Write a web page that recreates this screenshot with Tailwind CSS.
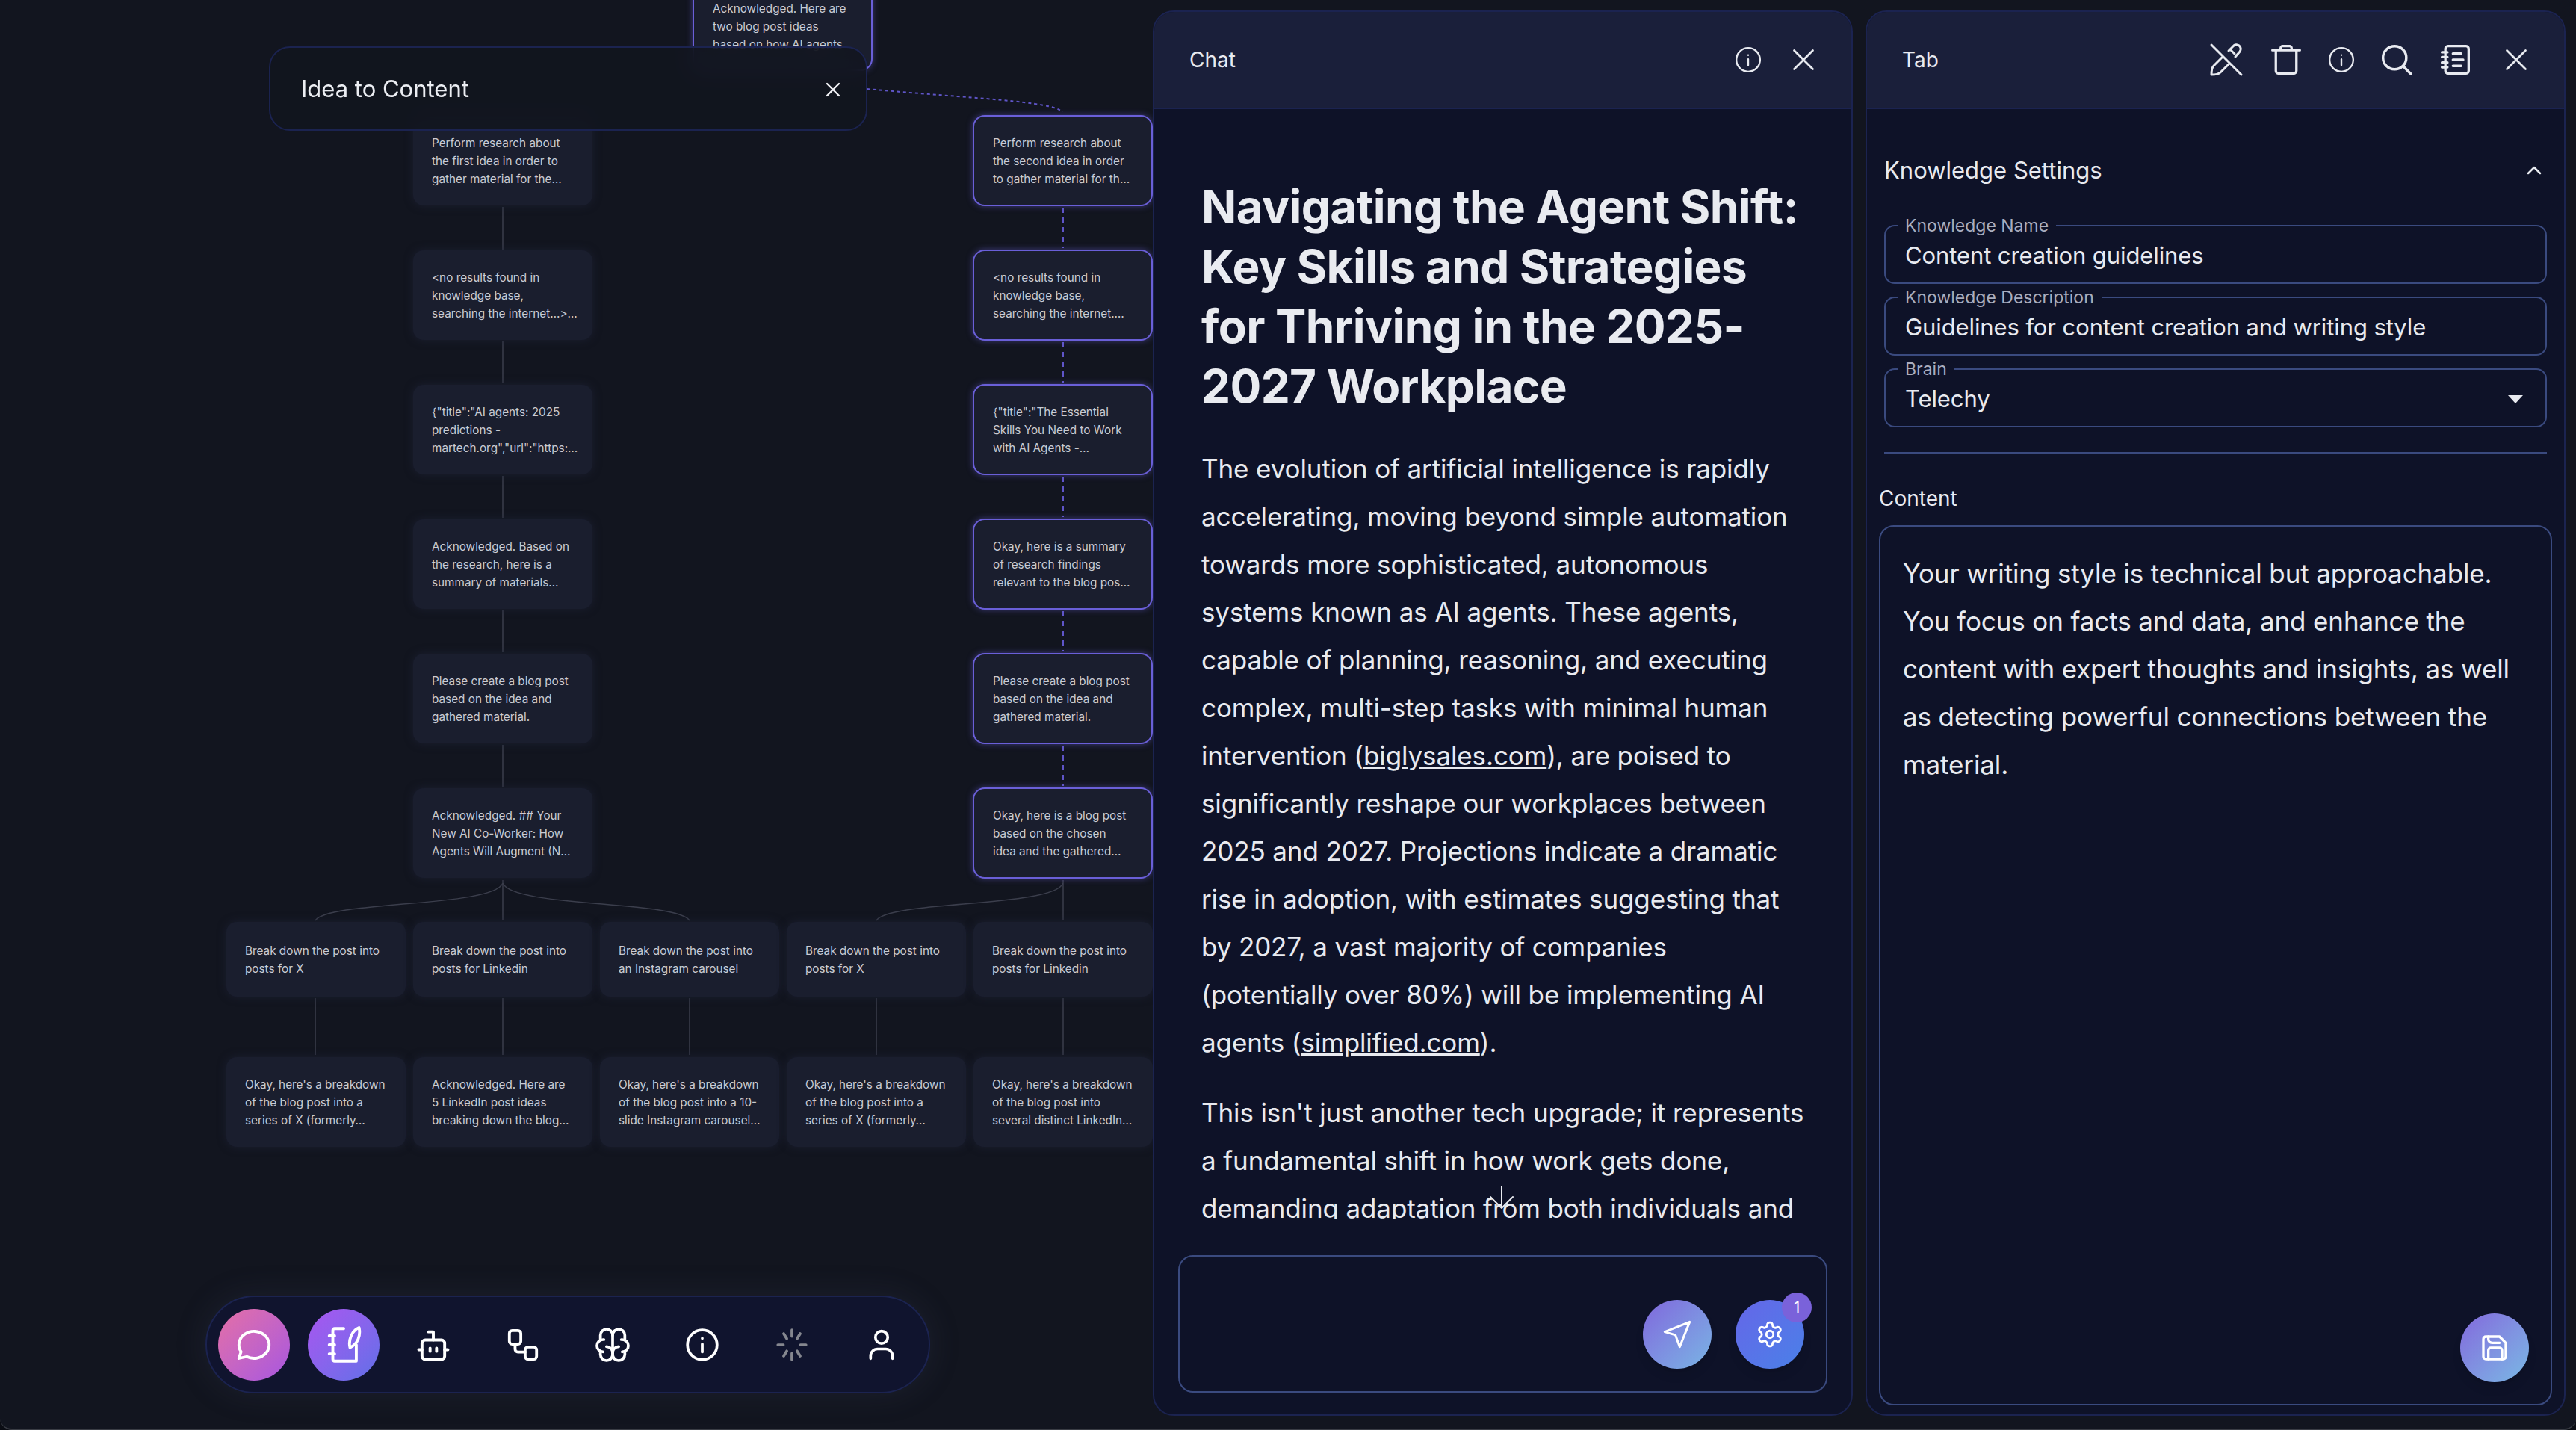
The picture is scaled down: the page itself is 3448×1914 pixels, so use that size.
<!DOCTYPE html>
<html lang="en">
<head>
<meta charset="UTF-8">
<title>Idea to Content</title>
<script src="https://cdn.jsdelivr.net/npm/@tailwindcss/browser@4"></script>
</head>
<body class="bg-[#0b0d14]">
<div class="w-[3448px] h-[1914px] flex gap-[17px] pt-[14px] pr-[14px] pb-[17px] bg-[#12151f] border-b-2 border-[#3a3d45] rounded-b-[16px] overflow-hidden font-['Inter',sans-serif] text-[#e8eaf0]">

  <!-- canvas -->
  <div id="canvas" class="relative w-[1526px] -mt-[14px] -mb-[17px] shrink-0">
    <svg class="absolute left-0 top-0" width="1543" height="1914" fill="none">
      <g stroke="#3b3e4c" stroke-width="1.5">
        <path d="M673 277V335M673 457V513M673 637V693M673 817V873M673 997V1053"/>
        <path d="M673 1178V1232M673 1182C660 1215 440 1205 422 1232M673 1182C686 1215 905 1205 923 1232"/>
        <path d="M1423 1178V1232M1423 1182C1410 1215 1190 1205 1173 1232"/>
        <path d="M422 1336V1412M673 1336V1412M923 1336V1412M1173 1336V1412M1423 1336V1412"/>
      </g>
      <g stroke="#5f55c8" stroke-width="2" stroke-dasharray="7 6">
        <path d="M1423 278V332M1423 458V512M1423 638V692M1423 818V872M1423 998V1052"/>
        <path d="M1161 119C1300 132 1410 135 1422 150" stroke-dasharray="4 4"/>
      </g>
    </svg>
    <div id="nodes"></div>

    <!-- title card -->
    <div class="absolute left-[360px] top-[62px] w-[801px] h-[113px] flex items-center justify-between pl-[41px] pr-[32px] pt-[2px] rounded-[28px] border-2 border-[#1b2350] bg-[#12151f]/85 backdrop-blur-md">
      <span class="text-[31px] text-[#eceef3]">Idea to Content</span>
      <svg width="24" height="24" viewBox="0 0 24 24" fill="none" stroke="#f0f1f5" stroke-width="2.4" stroke-linecap="round"><path d="M4 4l16 16M20 4L4 20"/></svg>
    </div>

    <!-- toolbar -->
    <div class="absolute left-[275px] top-[1734px] w-[970px] h-[131px] flex items-center gap-[24px] pl-[15px] rounded-full border-2 border-[#1b2350] bg-[#10142e] shadow-[0_0_40px_rgba(70,75,100,0.22)] text-white">
      <button class="w-[96px] h-[96px] shrink-0 flex items-center justify-center rounded-full bg-gradient-to-br from-[#e56ea5] to-[#a855e0]">
        <svg width="54" height="54" viewBox="0 0 24 24" fill="none" stroke="currentColor" stroke-width="1.700" stroke-linecap="round" stroke-linejoin="round"><path d="M3 20l1.3-3.9c-2.324-3.437-1.426-7.872 2.1-10.374c3.526-2.501 8.59-2.296 11.845.48c3.255 2.777 3.695 7.266 1.029 10.501c-2.666 3.235-7.615 4.215-11.574 2.293l-4.7 1"/></svg>
      </button>
      <button class="w-[96px] h-[96px] shrink-0 flex items-center justify-center rounded-full bg-gradient-to-br from-[#a855f0] to-[#5f6fe8]">
        <svg width="58" height="58" viewBox="0 0 24 24" fill="none" stroke="currentColor" stroke-width="1.600" stroke-linecap="round" stroke-linejoin="round"><path d="M12 3H7a1 1 0 0 0-1 1v16a1 1 0 0 0 1 1h12v-9"/><path d="M4 7h3M4 12h3M4 17h3"/><path d="M15.500 13.500C14.500 9.500 16.500 4 20.500 2.500C21.500 6.500 20 11.500 15.500 13.500z"/></svg>
      </button>
      <button class="w-[96px] h-[96px] shrink-0 flex items-center justify-center">
        <svg width="52" height="52" viewBox="0 0 24 24" fill="none" stroke="currentColor" stroke-width="1.800" stroke-linecap="round" stroke-linejoin="round"><rect x="5" y="9" width="14" height="12" rx="2"/><path d="M12 9V4H9M3 15h2M19 15h2M10 14v2M14 14v2"/></svg>
      </button>
      <button class="w-[96px] h-[96px] shrink-0 flex items-center justify-center">
        <svg width="46" height="46" viewBox="0 0 24 24" fill="none" stroke="currentColor" stroke-width="2" stroke-linecap="round" stroke-linejoin="round"><rect x="2.500" y="2" width="8" height="9.500" rx="2"/><rect x="13.500" y="13.500" width="8" height="8.500" rx="2"/><path d="M6.500 11.500V15a2 2 0 0 0 2 2h5"/></svg>
      </button>
      <button class="w-[96px] h-[96px] shrink-0 flex items-center justify-center">
        <svg width="56" height="56" viewBox="0 0 24 24" fill="none" stroke="currentColor" stroke-width="1.600" stroke-linecap="round" stroke-linejoin="round"><path d="M15.500 13a3.500 3.500 0 0 0-3.500 3.500v1a3.500 3.500 0 0 0 7 0v-1.800"/><path d="M8.500 13a3.500 3.500 0 0 1 3.500 3.500v1a3.500 3.500 0 0 1-7 0v-1.800"/><path d="M17.500 16a3.500 3.500 0 0 0 0-7h-.5"/><path d="M19 9.300v-2.800a3.500 3.500 0 0 0-7 0"/><path d="M6.500 16a3.500 3.500 0 0 1 0-7h.5"/><path d="M5 9.300v-2.800a3.500 3.500 0 0 1 7 0v10"/></svg>
      </button>
      <button class="w-[96px] h-[96px] shrink-0 flex items-center justify-center">
        <svg width="50" height="50" viewBox="0 0 24 24" fill="none" stroke="currentColor" stroke-width="1.800" stroke-linecap="round"><circle cx="12" cy="12" r="9.500"/><path d="M12 11.500v5M12 7.800v.01"/></svg>
      </button>
      <button class="w-[96px] h-[96px] shrink-0 flex items-center justify-center text-[#85878f]">
        <svg width="50" height="50" viewBox="0 0 24 24" fill="none" stroke="currentColor" stroke-width="1.800" stroke-linecap="round"><path d="M12 6.500V2.500M15.300 8l2-3.200M17.500 12h3.500M15.300 16l2 3.200M12 17.500v4M8.700 16l-2 3.200M6.500 12H3M8.700 8l-2-3.200"/></svg>
      </button>
      <button class="w-[96px] h-[96px] shrink-0 flex items-center justify-center">
        <svg width="44" height="44" viewBox="0 0 24 24" fill="none" stroke="currentColor" stroke-width="2" stroke-linecap="round"><circle cx="12" cy="6.500" r="4.500"/><path d="M4 22v-2a5 5 0 0 1 5-5h6a5 5 0 0 1 5 5v2"/></svg>
      </button>
    </div>
  </div>

  <!-- chat panel -->
  <section class="relative w-[937px] shrink-0 flex flex-col rounded-[28px] border-2 border-[#1b2350] bg-[#0e1228] overflow-hidden">
    <header class="h-[130px] shrink-0 flex items-center justify-between pl-[47px] pr-[49px] bg-[#1a1f3a] border-b-2 border-[#1b2350]">
      <span class="text-[28px]">Chat</span>
      <div class="flex items-center gap-[40px]">
        <svg width="38" height="38" viewBox="0 0 24 24" fill="none" stroke="#e8eaf0" stroke-width="1.500" stroke-linecap="round"><circle cx="12" cy="12" r="10"/><path d="M12 11.500v5M12 8v.01"/></svg>
        <svg width="30" height="30" viewBox="0 0 24 24" fill="none" stroke="#e8eaf0" stroke-width="2.200" stroke-linecap="round"><path d="M2 2l20 20M22 2L2 22"/></svg>
      </div>
    </header>
    <div class="h-[1486px] shrink-0 overflow-hidden pt-[91px] pl-[63px] pr-[56px]">
      <h1 class="text-[62px] leading-[80px] tracking-[-0.6px] font-bold mb-[38px] text-[#e9ebf0]">Navigating the Agent Shift: Key Skills and Strategies for Thriving in the 2025-2027 Workplace</h1>
      <p class="text-[35px] leading-[64px] tracking-[-0.12px] mb-[30px]">The evolution of artificial intelligence is rapidly accelerating, moving beyond simple automation towards more sophisticated, autonomous systems known as AI agents. These agents, capable of planning, reasoning, and executing complex, multi-step tasks with minimal human intervention (<a class="underline">biglysales.com</a>), are poised to significantly reshape our workplaces between 2025 and 2027. Projections indicate a dramatic rise in adoption, with estimates suggesting that by 2027, a vast majority of companies (potentially over 80%) will be implementing AI agents (<a class="underline">simplified.com</a>).</p>
      <p class="text-[35px] leading-[64px] tracking-[-0.12px]">This isn't just another tech upgrade; it represents a fundamental shift in how work gets done, demanding adaptation from both individuals and organizations alike.</p>
    </div>
    <svg class="absolute left-[447px] top-[1571px]" width="36" height="32" viewBox="0 0 36 32" fill="none" stroke="#e8eaf0" stroke-width="2" stroke-linecap="round" stroke-linejoin="round"><path d="M18 1V30M3 15l15 15 15-15"/></svg>
    <div class="relative mx-[32px] mt-[48px] h-[184px] rounded-[20px] border-2 border-[#3a4a7f] text-white">
      <div class="absolute left-[620px] top-[58px] flex gap-[32px]">
        <button class="w-[92px] h-[92px] flex items-center justify-center rounded-full bg-gradient-to-br from-[#7f66dc] to-[#78b4e4] shadow-lg">
          <svg width="40" height="40" viewBox="0 0 24 24" fill="none" stroke="currentColor" stroke-width="1.800" stroke-linecap="round" stroke-linejoin="round"><path d="M22 2L2 10l8.500 2.500L14 22z"/></svg>
        </button>
        <button class="relative w-[92px] h-[92px] flex items-center justify-center rounded-full bg-gradient-to-br from-[#6466e8] to-[#4880e8] shadow-lg">
          <svg width="38" height="38" viewBox="0 0 24 24" fill="none" stroke="currentColor" stroke-width="1.800" stroke-linecap="round" stroke-linejoin="round"><path d="M12.220 2h-.44a2 2 0 0 0-2 2v.18a2 2 0 0 1-1 1.730l-.43.25a2 2 0 0 1-2 0l-.15-.08a2 2 0 0 0-2.730.73l-.22.38a2 2 0 0 0 .73 2.730l.15.1a2 2 0 0 1 1 1.720v.51a2 2 0 0 1-1 1.740l-.15.09a2 2 0 0 0-.73 2.730l.22.38a2 2 0 0 0 2.730.73l.15-.08a2 2 0 0 1 2 0l.43.25a2 2 0 0 1 1 1.730V20a2 2 0 0 0 2 2h.44a2 2 0 0 0 2-2v-.18a2 2 0 0 1 1-1.730l.43-.25a2 2 0 0 1 2 0l.15.08a2 2 0 0 0 2.730-.73l.22-.39a2 2 0 0 0-.73-2.730l-.15-.08a2 2 0 0 1-1-1.740v-.5a2 2 0 0 1 1-1.740l.15-.09a2 2 0 0 0 .73-2.730l-.22-.38a2 2 0 0 0-2.730-.73l-.15.08a2 2 0 0 1-2 0l-.43-.25a2 2 0 0 1-1-1.730V4a2 2 0 0 0-2-2z"/><circle cx="12" cy="12" r="3"/></svg>
          <span class="absolute -right-[10px] -top-[10px] w-[40px] h-[40px] flex items-center justify-center rounded-full bg-[#7a62da] text-[20px]">1</span>
        </button>
      </div>
    </div>
  </section>

  <!-- tab panel -->
  <section class="relative w-[937px] shrink-0 flex flex-col rounded-[28px] border-2 border-[#1b2350] bg-[#0e1228] overflow-hidden">
    <header class="h-[130px] shrink-0 flex items-center justify-between pl-[47px] pr-[49px] bg-[#1a1f3a] border-b-2 border-[#1b2350]">
      <span class="text-[28px]">Tab</span>
      <div class="flex items-center text-[#e8eaf0]">
        <svg class="mr-[34px]" width="48" height="48" viewBox="0 0 24 24" fill="none" stroke="currentColor" stroke-width="1.500" stroke-linecap="round" stroke-linejoin="round"><path d="M2 2l20 20M9.500 10L3.500 16c-1 1-1.500 3.500-1.500 6c2.500 0 5-.5 6-1.500l6-6"/><path d="M13.500 6l3-3a2.500 2.500 0 0 1 4.500 3.500l-3 3.500M14.500 5l3 3"/></svg>
        <svg class="mr-[33px]" width="44" height="48" viewBox="0 0 24 24" fill="none" stroke="currentColor" stroke-width="1.800" stroke-linecap="round" stroke-linejoin="round"><path d="M2 5h20M8 5V3.500A1.500 1.500 0 0 1 9.500 2h5A1.500 1.500 0 0 1 16 3.500V5M4.500 5v15a2 2 0 0 0 2 2h11a2 2 0 0 0 2-2V5"/></svg>
        <svg class="mr-[33px]" width="38" height="38" viewBox="0 0 24 24" fill="none" stroke="currentColor" stroke-width="1.500" stroke-linecap="round"><circle cx="12" cy="12" r="10"/><path d="M12 11.500v5M12 8v.01"/></svg>
        <svg class="mr-[34px]" width="44" height="44" viewBox="0 0 24 24" fill="none" stroke="currentColor" stroke-width="1.900" stroke-linecap="round"><circle cx="10.500" cy="10.500" r="8.500"/><path d="M16.800 16.800L22.500 22.500"/></svg>
        <svg class="mr-[45px]" width="44" height="48" viewBox="0 0 24 24" fill="none" stroke="currentColor" stroke-width="1.800" stroke-linecap="round" stroke-linejoin="round"><rect x="5" y="2" width="17" height="20" rx="2"/><path d="M10.500 7.500h6M10.500 12h7.500M10.500 16.500h6M2.500 6.500h4M2.500 10h4M2.500 14h4M2.500 17.500h4"/></svg>
        <svg width="30" height="30" viewBox="0 0 24 24" fill="none" stroke="currentColor" stroke-width="2.200" stroke-linecap="round"><path d="M2 2l20 20M22 2L2 22"/></svg>
      </div>
    </header>
    <div class="flex-1 relative px-[16px] flex flex-col">
      <div class="flex items-center justify-between h-[74px] mt-[45px] pl-[7px] pr-[13px]">
        <span class="text-[31px]">Knowledge Settings</span>
        <svg width="22" height="14" viewBox="0 0 22 14" fill="none" stroke="#e8eaf0" stroke-width="2.500" stroke-linecap="round" stroke-linejoin="round"><path d="M3 11l8-8 8 8"/></svg>
      </div>
      <div class="mx-[7px] flex flex-col gap-[6px] mt-[25px]">
        <fieldset class="h-[90px] border-2 border-[#3a4a7f] rounded-[14px] pl-[16px] pr-[26px]">
          <legend class="px-[10px] text-[23px] leading-[24px] text-[#a9adbe]">Knowledge Name</legend>
          <div class="pl-[10px] text-[31px] leading-[40px] tracking-[-0.1px] mt-[8px]">Content creation guidelines</div>
        </fieldset>
        <fieldset class="h-[90px] border-2 border-[#3a4a7f] rounded-[14px] pl-[16px] pr-[26px]">
          <legend class="px-[10px] text-[23px] leading-[24px] text-[#a9adbe]">Knowledge Description</legend>
          <div class="pl-[10px] text-[31px] leading-[40px] tracking-[-0.1px] mt-[8px]">Guidelines for content creation and writing style</div>
        </fieldset>
        <fieldset class="h-[90px] border-2 border-[#3a4a7f] rounded-[14px] pl-[16px] pr-[30px]">
          <legend class="px-[10px] text-[23px] leading-[24px] text-[#a9adbe]">Brain</legend>
          <div class="flex items-center justify-between pl-[10px] text-[31px] leading-[40px] tracking-[-0.1px] mt-[8px]">Telechy
            <svg width="20" height="11" viewBox="0 0 20 11"><path d="M0 0h20L10 11z" fill="#e8eaf0"/></svg>
          </div>
        </fieldset>
      </div>
      <div class="mx-[7px] mt-[33px] h-[2px] bg-[#3a4a7f]"></div>
      <label class="mt-[42px] text-[28px] leading-[36px] text-[#e8eaf0]">Content</label>
      <div class="relative mt-[18px] h-[1178px] rounded-[20px] border-2 border-[#3a4a7f] px-[30px] pt-[30px] text-[35px] leading-[64px] tracking-[-0.12px]">
        Your writing style is technical but approachable. You focus on facts and data, and enhance the content with expert thoughts and insights, as well as detecting powerful connections between the material.
        <button class="absolute right-[29px] bottom-[29px] w-[92px] h-[92px] flex items-center justify-center rounded-full bg-gradient-to-br from-[#8268dc] to-[#78b8e4] text-white shadow-lg">
          <svg width="40" height="40" viewBox="0 0 24 24" fill="none" stroke="currentColor" stroke-width="2" stroke-linecap="round" stroke-linejoin="round"><path d="M6 3h10l5 5v11a2 2 0 0 1-2 2H5a2 2 0 0 1-2-2V5a2 2 0 0 1 2-2z"/><path d="M7 3v2a3 3 0 0 0 3 3h6M7 21v-7a2 2 0 0 1 2-2h7a2 2 0 0 1 2 2v7"/></svg>
        </button>
      </div>
    </div>
  </section>
</div>
<script>
  // diagram data: two columns of steps that fan out into the post nodes
  const plain = "absolute w-[240px] flex items-center pl-[25px] pr-[12px] pt-[2px] rounded-[14px] bg-[#1a1e2e] shadow-[0_0_12px_rgba(32,36,56,0.7)] text-[15.3px] leading-[24px] text-[#c9cbd3] whitespace-nowrap overflow-hidden";
  const picked = "absolute w-[241px] flex items-center pl-[25px] pr-[12px] pt-[2px] rounded-[16px] border-2 border-[#6a5fd8] bg-[#1a1e2e] shadow-[0_0_8px_rgba(106,95,216,0.5)] text-[15.3px] leading-[24px] text-[#c9cbd3] whitespace-nowrap overflow-hidden";
  const nodes = [
    [927, -25, 120, 1, "Acknowledged. Here are<br>two blog post ideas<br>based on how AI agents"],
    [553, 155, 120, 0, "Perform research about<br>the first idea in order to<br>gather material for the…"],
    [553, 335, 120, 0, "&lt;no results found in<br>knowledge base,<br>searching the internet…&gt;…"],
    [553, 515, 120, 0, '{"title":"AI agents: 2025<br>predictions -<br>martech.org","url":"https:…'],
    [553, 695, 120, 0, "Acknowledged. Based on<br>the research, here is a<br>summary of materials…"],
    [553, 875, 120, 0, "Please create a blog post<br>based on the idea and<br>gathered material."],
    [553, 1055, 120, 0, "Acknowledged. ## Your<br>New AI Co-Worker: How<br>Agents Will Augment (N…"],
    [1302, 154, 122, 1, "Perform research about<br>the second idea in order<br>to gather material for th…"],
    [1302, 334, 122, 1, "&lt;no results found in<br>knowledge base,<br>searching the internet.…"],
    [1302, 514, 122, 1, '{"title":"The Essential<br>Skills You Need to Work<br>with AI Agents -…'],
    [1302, 694, 122, 1, "Okay, here is a summary<br>of research findings<br>relevant to the blog pos…"],
    [1302, 874, 122, 1, "Please create a blog post<br>based on the idea and<br>gathered material."],
    [1302, 1054, 122, 1, "Okay, here is a blog post<br>based on the chosen<br>idea and the gathered…"],
    [303, 1234, 100, 0, "Break down the post into<br>posts for X"],
    [553, 1234, 100, 0, "Break down the post into<br>posts for Linkedin"],
    [803, 1234, 100, 0, "Break down the post into<br>an Instagram carousel"],
    [1053, 1234, 100, 0, "Break down the post into<br>posts for X"],
    [1303, 1234, 100, 0, "Break down the post into<br>posts for Linkedin"],
    [303, 1415, 120, 0, "Okay, here's a breakdown<br>of the blog post into a<br>series of X (formerly…"],
    [553, 1415, 120, 0, "Acknowledged. Here are<br>5 LinkedIn post ideas<br>breaking down the blog…"],
    [803, 1415, 120, 0, "Okay, here's a breakdown<br>of the blog post into a 10-<br>slide Instagram carousel…"],
    [1053, 1415, 120, 0, "Okay, here's a breakdown<br>of the blog post into a<br>series of X (formerly…"],
    [1303, 1415, 120, 0, "Okay, here's a breakdown<br>of the blog post into<br>several distinct LinkedIn…"],
  ];
  const holder = document.getElementById("nodes");
  nodes.forEach(([x, y, h, sel, text]) => {
    const el = document.createElement("div");
    el.className = sel ? picked : plain;
    el.style.left = x + "px";
    el.style.top = y + "px";
    el.style.height = h + "px";
    el.innerHTML = `<div>${text}</div>`;
    holder.appendChild(el);
  });
</script>
</body>
</html>
